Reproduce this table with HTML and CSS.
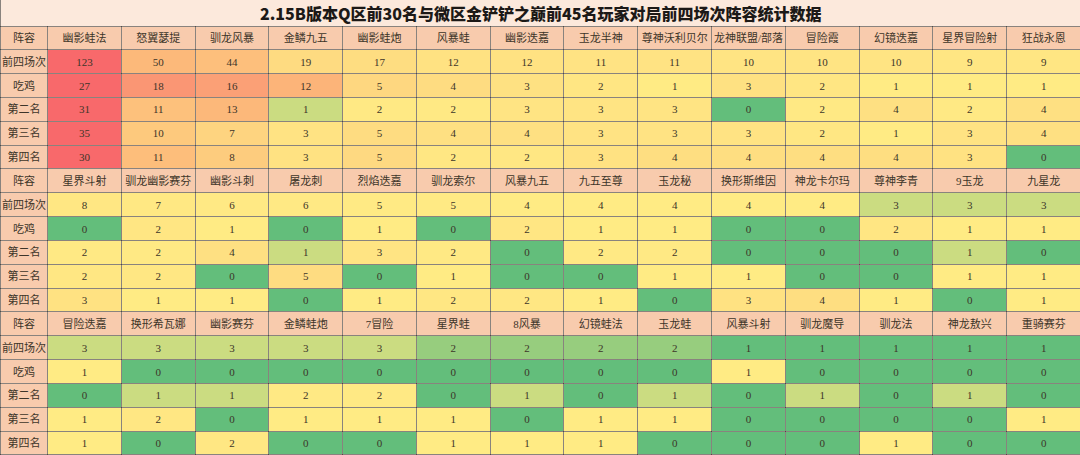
FILE: index.html
```html
<!DOCTYPE html>
<html lang="zh-CN">
<head>
<meta charset="utf-8">
<title>阵容统计数据</title>
<link rel="stylesheet" href="styles.css">
</head>
<body>
<table class="stats">
<colgroup><col class="col-label"><col class="col-data" span="14"></colgroup>
<thead>
<tr class="title-row"><th class="title" colspan="15">2.15B版本Q区前30名与微区金铲铲之巅前45名玩家对局前四场次阵容统计数据</th></tr>
</thead>
<tbody>
<tr class="head-row"><th class="label">阵容</th><th>幽影蛙法</th><th>怒翼瑟提</th><th>驯龙风暴</th><th>金鳞九五</th><th>幽影蛙炮</th><th>风暴蛙</th><th>幽影迭嘉</th><th>玉龙半神</th><th>尊神沃利贝尔</th><th>龙神联盟/部落</th><th>冒险霞</th><th>幻镜迭嘉</th><th>星界冒险射</th><th>狂战永恩</th></tr>
<tr class="r-top4"><th class="label">前四场次</th><td>123</td><td>50</td><td>44</td><td>19</td><td>17</td><td>12</td><td>12</td><td>11</td><td>11</td><td>10</td><td>10</td><td>10</td><td>9</td><td>9</td></tr>
<tr class="r-win"><th class="label">吃鸡</th><td>27</td><td>18</td><td>16</td><td>12</td><td>5</td><td>4</td><td>3</td><td>2</td><td>1</td><td>3</td><td>2</td><td>1</td><td>1</td><td>1</td></tr>
<tr class="r-2nd"><th class="label">第二名</th><td>31</td><td>11</td><td>13</td><td>1</td><td>2</td><td>2</td><td>3</td><td>3</td><td>3</td><td>0</td><td>2</td><td>4</td><td>2</td><td>4</td></tr>
<tr class="r-3rd"><th class="label">第三名</th><td>35</td><td>10</td><td>7</td><td>3</td><td>5</td><td>4</td><td>4</td><td>3</td><td>3</td><td>3</td><td>2</td><td>1</td><td>3</td><td>4</td></tr>
<tr class="r-4th"><th class="label">第四名</th><td>30</td><td>11</td><td>8</td><td>3</td><td>5</td><td>2</td><td>2</td><td>3</td><td>4</td><td>4</td><td>4</td><td>4</td><td>3</td><td>0</td></tr>

<tr class="head-row"><th class="label">阵容</th><th>星界斗射</th><th>驯龙幽影赛芬</th><th>幽影斗刺</th><th>屠龙刺</th><th>烈焰迭嘉</th><th>驯龙索尔</th><th>风暴九五</th><th>九五至尊</th><th>玉龙秘</th><th>换形斯维因</th><th>神龙卡尔玛</th><th>尊神李青</th><th>9玉龙</th><th>九星龙</th></tr>
<tr class="r-top4"><th class="label">前四场次</th><td>8</td><td>7</td><td>6</td><td>6</td><td>5</td><td>5</td><td>4</td><td>4</td><td>4</td><td>4</td><td>4</td><td>3</td><td>3</td><td>3</td></tr>
<tr class="r-win"><th class="label">吃鸡</th><td>0</td><td>2</td><td>1</td><td>0</td><td>1</td><td>0</td><td>2</td><td>1</td><td>1</td><td>0</td><td>0</td><td>2</td><td>1</td><td>1</td></tr>
<tr class="r-2nd"><th class="label">第二名</th><td>2</td><td>2</td><td>4</td><td>1</td><td>3</td><td>2</td><td>0</td><td>2</td><td>2</td><td>0</td><td>0</td><td>0</td><td>1</td><td>0</td></tr>
<tr class="r-3rd"><th class="label">第三名</th><td>2</td><td>2</td><td>0</td><td>5</td><td>0</td><td>1</td><td>0</td><td>0</td><td>1</td><td>1</td><td>0</td><td>0</td><td>1</td><td>1</td></tr>
<tr class="r-4th"><th class="label">第四名</th><td>3</td><td>1</td><td>1</td><td>0</td><td>1</td><td>2</td><td>2</td><td>1</td><td>0</td><td>3</td><td>4</td><td>1</td><td>0</td><td>1</td></tr>

<tr class="head-row"><th class="label">阵容</th><th>冒险迭嘉</th><th>换形希瓦娜</th><th>幽影赛芬</th><th>金鳞蛙炮</th><th>7冒险</th><th>星界蛙</th><th>8风暴</th><th>幻镜蛙法</th><th>玉龙蛙</th><th>风暴斗射</th><th>驯龙魔导</th><th>驯龙法</th><th>神龙敖兴</th><th>重骑赛芬</th></tr>
<tr class="r-top4"><th class="label">前四场次</th><td>3</td><td>3</td><td>3</td><td>3</td><td>3</td><td>2</td><td>2</td><td>2</td><td>2</td><td>1</td><td>1</td><td>1</td><td>1</td><td>1</td></tr>
<tr class="r-win"><th class="label">吃鸡</th><td>1</td><td>0</td><td>0</td><td>0</td><td>0</td><td>0</td><td>0</td><td>0</td><td>0</td><td>1</td><td>0</td><td>0</td><td>0</td><td>0</td></tr>
<tr class="r-2nd"><th class="label">第二名</th><td>0</td><td>1</td><td>1</td><td>2</td><td>2</td><td>0</td><td>1</td><td>0</td><td>1</td><td>0</td><td>1</td><td>0</td><td>1</td><td>0</td></tr>
<tr class="r-3rd"><th class="label">第三名</th><td>1</td><td>2</td><td>0</td><td>1</td><td>1</td><td>1</td><td>0</td><td>1</td><td>1</td><td>0</td><td>0</td><td>0</td><td>0</td><td>1</td></tr>
<tr class="r-4th"><th class="label">第四名</th><td>1</td><td>0</td><td>2</td><td>0</td><td>0</td><td>1</td><td>1</td><td>1</td><td>0</td><td>0</td><td>0</td><td>1</td><td>0</td><td>0</td></tr>
</tbody>
</table>
<script src="script.js"></script>
</body>
</html>
```

FILE: styles.css
```css
html, body {
  margin: 0;
  padding: 0;
  background: #ffffff;
  overflow: hidden;
}

.stats {
  border-collapse: collapse;
  table-layout: fixed;
  width: 1080px;
  font-family: "Liberation Serif", "Noto Sans CJK SC", serif;
  font-size: 11px;
  color: #3d3529;
}

.col-label { width: 47px; }
.col-data { width: 73.79px; }

.stats th,
.stats td {
  border: 1px solid rgba(40, 30, 20, 0.55);
  padding: 0;
  text-align: center;
  vertical-align: middle;
  white-space: nowrap;
  overflow: hidden;
  font-weight: normal;
  line-height: 12px;
}

.stats tr > :last-child {
  border-right: none;
}

.title-row { height: 26px; }

.stats .title {
  background: #fce9dc;
  border-top: none;
  font-family: "Noto Sans CJK SC", sans-serif;
  font-weight: 900;
  font-size: 16px;
  line-height: 20px;
  color: #1c1917;
  letter-spacing: 0;
}

.stats tbody tr { height: 23.83px; }

.head-row th,
.stats th.label {
  background: #f8cbad;
}

.stats td {
  background: #ffeb84;
}
```

FILE: script.js
```javascript
(function () {
  var groups = ['r-top4', 'r-win', 'r-2nd', 'r-3rd', 'r-4th'];
  var G = [99, 190, 123], Y = [255, 235, 132], R = [248, 105, 107];
  function mix(a, b, t) {
    return a.map(function (v, i) { return Math.round(v + (b[i] - v) * t); });
  }
  function pct(s, p) {
    var r = p * (s.length - 1), lo = Math.floor(r), hi = Math.ceil(r);
    return s[lo] + (s[hi] - s[lo]) * (r - lo);
  }
  groups.forEach(function (cls) {
    var cells = Array.prototype.slice.call(document.querySelectorAll('tr.' + cls + ' td'));
    var vals = cells.map(function (c) { return parseFloat(c.textContent); });
    var s = vals.slice().sort(function (a, b) { return a - b; });
    var min = s[0], max = s[s.length - 1], mid = pct(s, 0.5);
    cells.forEach(function (c, i) {
      var v = vals[i], col;
      if (v <= mid) {
        col = mid === min ? Y : mix(G, Y, (v - min) / (mid - min));
      } else {
        col = mix(Y, R, (v - mid) / (max - mid));
      }
      c.style.backgroundColor = 'rgb(' + col.join(',') + ')';
    });
  });
})();
```
